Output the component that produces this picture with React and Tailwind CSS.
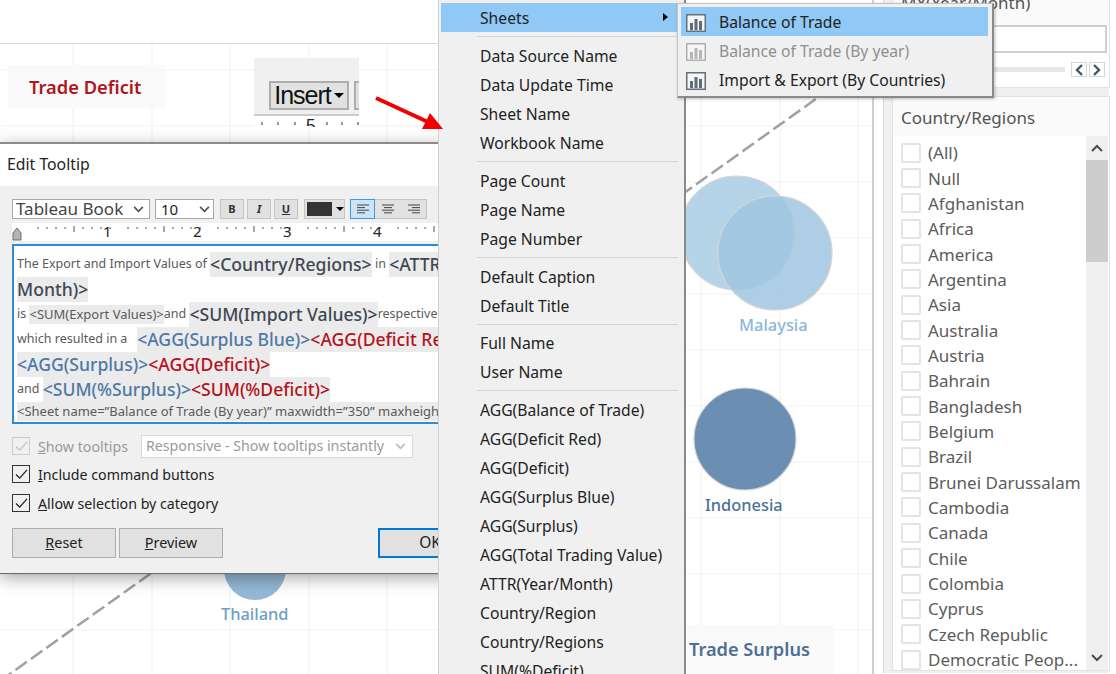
import React from 'react';

const menuGroups = [
  ['Data Source Name', 'Data Update Time', 'Sheet Name', 'Workbook Name'],
  ['Page Count', 'Page Name', 'Page Number'],
  ['Default Caption', 'Default Title'],
  ['Full Name', 'User Name'],
  [
    'AGG(Balance of Trade)',
    'AGG(Deficit Red)',
    'AGG(Deficit)',
    'AGG(Surplus Blue)',
    'AGG(Surplus)',
    'AGG(Total Trading Value)',
    'ATTR(Year/Month)',
    'Country/Region',
    'Country/Regions',
    'SUM(%Deficit)',
  ],
];

const countries = [
  '(All)', 'Null', 'Afghanistan', 'Africa', 'America', 'Argentina', 'Asia', 'Australia', 'Austria',
  'Bahrain', 'Bangladesh', 'Belgium', 'Brazil', 'Brunei Darussalam', 'Cambodia', 'Canada', 'Chile',
  'Colombia', 'Cyprus', 'Czech Republic', 'Democratic Peop...',
];

const sheets = [
  { name: 'Balance of Trade', active: true },
  { name: 'Balance of Trade (By year)', disabled: true },
  { name: 'Import & Export (By Countries)' },
];

// Canvas behind everything: light grid, dashed reference line, bubbles
const ChartLayer = () => {
  const xs = [73, 152, 230, 309, 387, 466, 544, 623, 701, 780, 858];
  const ys = [70, 126, 182, 238, 294, 350, 406, 462, 518, 574, 630];
  return (
    <svg width="872" height="674" className="absolute left-0 top-0">
      <line x1="0" y1="43.5" x2="872" y2="43.5" stroke="#d9d9d9" />
      {xs.map((x) => (
        <line key={x} x1={x} y1="44" x2={x} y2="674" stroke="#f1f1f1" />
      ))}
      {ys.map((y) => (
        <line key={y} x1="0" y1={y} x2="872" y2={y} stroke="#f1f1f1" />
      ))}
      <line x1="0" y1="681" x2="935" y2="14" stroke="#a0a0a0" strokeWidth="2.5" strokeDasharray="14 5" />
      <circle cx="255" cy="569" r="31" fill="#94b8d6" />
      <circle cx="737" cy="233" r="57" fill="#a9cce4" fillOpacity="0.85" stroke="#d4d4d4" strokeWidth="1.2" />
      <circle cx="775" cy="253" r="57" fill="#a0c6e0" fillOpacity="0.85" stroke="#d4d4d4" strokeWidth="1.2" />
      <circle cx="745" cy="439" r="51" fill="#6a8fb2" stroke="#d4d4d4" strokeWidth="1.2" />
    </svg>
  );
};

const ChartLabel = ({ className, children }) => (
  <div className={`absolute font-['Noto_Sans',sans-serif] text-[16.4px] font-medium leading-5 ${className}`}>
    {children}
  </div>
);

const ChevronIcon = ({ up, className = 'w-3 h-2' }) => (
  <svg viewBox="0 0 12 8" className={className}>
    <path d={up ? 'M1 7 L6 2 L11 7' : 'M1 1 L6 6 L11 1'} fill="none" stroke="currentColor" strokeWidth="2" />
  </svg>
);

const Sidebar = () => (
  <div className="w-[244px] h-[674px] shrink-0 bg-white border-l-2 border-[#cfcfcf] pl-[9px] overflow-hidden font-['Noto_Sans',sans-serif]">
    <div className="h-full w-[226px] bg-[#f0f0f0] border-l border-[#d8d8d8] pl-[8px]">
      <div className="w-[218px] h-[89px] bg-white border border-[#e2e2e2] -mt-px">
        <div className="h-[25px] bg-[#fafafa] flex items-start px-2">
          <span className="text-[17px] leading-[24px] -mt-[9px] text-[#555] whitespace-nowrap">MY(Year/Month)</span>
        </div>
        <div className="mx-[2px] h-[28px] bg-white border-2 border-[#cfcfcf]" />
        <div className="flex items-center gap-[2px] mt-[9px] pr-[4px]">
          <div className="h-[5px] flex-1 bg-[#e6e6e6]" />
          <div className="ml-[4px] w-[16px] h-[15px] border border-[#d5d5d5] flex items-center justify-center text-[#44566c]">
            <svg viewBox="0 0 8 12" className="w-[8px] h-[12px]"><path d="M7 1 L2 6 L7 11" fill="none" stroke="currentColor" strokeWidth="2.4" /></svg>
          </div>
          <div className="w-[16px] h-[15px] border border-[#d5d5d5] flex items-center justify-center text-[#44566c]">
            <svg viewBox="0 0 8 12" className="w-[8px] h-[12px]"><path d="M1 1 L6 6 L1 11" fill="none" stroke="currentColor" strokeWidth="2.4" /></svg>
          </div>
        </div>
      </div>
      <div className="w-[218px] h-[575px] mt-[8px] bg-white border border-[#e2e2e2]">
        <div className="h-[39px] pt-[2px] bg-[#fafafa] flex items-center px-2 text-[17px] text-[#555]">Country/Regions</div>
        <div className="flex h-[534px] pr-[1px]">
          <div className="flex-1 min-w-0 pl-2 pt-[4px]">
            {countries.map((name) => (
              <div key={name} className="h-[25.35px] flex items-center gap-[7px]">
                <div className="w-[20px] h-[20px] shrink-0 bg-white border-2 border-[#e4e4e4] rounded-[2px]" />
                <span className="text-[17px] leading-none text-[#5c5c5c] whitespace-nowrap">{name}</span>
              </div>
            ))}
          </div>
          <div className="w-[22px] shrink-0 bg-[#f0f0f0] flex flex-col">
            <div className="h-[24px] flex items-center justify-center text-[#4d4d4d]"><ChevronIcon up /></div>
            <div className="h-[102px] bg-[#cdcdcd]" />
            <div className="flex-1 flex items-end justify-center pb-[8px] text-[#4d4d4d]"><ChevronIcon /></div>
          </div>
        </div>
      </div>
    </div>
  </div>
);

const InsertToolbar = () => (
  <div className="absolute left-[254px] top-[58px] w-[105px] h-[69px] overflow-hidden bg-white font-['Liberation_Sans',sans-serif]">
    <div className="h-[58px] bg-[#f0f0f0] border-b-2 border-[#cbcbcb] pt-[23px] pl-[15px] flex gap-[5px]">
      <div className="w-[80px] h-[29px] shrink-0 bg-[#e1e1e1] border-2 border-[#adadad] flex items-center justify-center gap-[3px] text-[#111]">
        <span className="text-[25px] tracking-[-1px] leading-none">Insert</span>
        <span className="w-0 h-0 border-x-[5px] border-x-transparent border-t-[5px] border-t-black" />
      </div>
      <div className="w-[20px] h-[29px] shrink-0 bg-[#e1e1e1] border-2 border-[#adadad]" />
    </div>
    <div className="relative h-[11px] overflow-hidden">
      <svg width="105" height="11" className="absolute left-0 top-0">
        {[8, 24, 41, 73, 88, 104].map((x) => (
          <line key={x} x1={x} y1="6" x2={x} y2="9" stroke="#333" />
        ))}
      </svg>
      <span className="absolute left-[52px] top-0 text-[17px] leading-[20px] text-[#222]">5</span>
    </div>
  </div>
);

const ToolBtn = ({ children, className = '' }) => (
  <div className={`w-[24px] h-[20px] bg-[#e1e1e1] border border-[#c4c4c4] flex items-center justify-center text-[11px] text-[#333] ${className}`}>
    {children}
  </div>
);

const AlignIcon = ({ lines }) => (
  <svg viewBox="0 0 14 10" className="w-[14px] h-[10px]">
    {lines.map(([x1, x2], i) => (
      <line key={i} x1={x1} x2={x2} y1={1 + i * 2.6} y2={1 + i * 2.6} stroke="#444" strokeWidth="1" />
    ))}
  </svg>
);

const TooltipRuler = () => {
  const ticks = [];
  for (let x = 26; x < 440; x += 9) {
    if ((x - 17) % 90 === 0) continue;
    const tall = (x - 17) % 45 === 0;
    ticks.push(
      <line key={x} x1={x} x2={x} y1={tall ? 226 - 223 : 227 - 223} y2={tall ? 232 - 223 : 229 - 223} stroke="#555" />
    );
  }
  return (
    <div className="relative h-[18px] mt-[4px] bg-white">
      <svg width="470" height="18" className="absolute left-0 top-0">
        {ticks}
        <path d="M1 17 V10 L5 5 L9 10 V17 Z" fill="#b4b4b4" stroke="#6d6d6d" />
      </svg>
      {[1, 2, 3, 4].map((n, i) => (
        <span key={n} className={`absolute top-[-3px] text-[15px] leading-[22px] text-[#222] ${['left-[91px]', 'left-[181px]', 'left-[271px]', 'left-[361px]'][i]}`}>
          {n}
        </span>
      ))}
    </div>
  );
};

const Small = ({ children, shaded }) => (
  <span className={`font-normal text-[#5a5a5a] ${shaded ? 'text-[13px] bg-[#ebebeb]' : 'text-[12.5px]'}`}>{children}</span>
);
const Field = ({ children, color = 'text-[#3f4852]' }) => (
  <span className={`text-[17.6px] leading-[25px] bg-[#ebebeb] ${color}`}>{children}</span>
);
const Line = ({ children, className = 'h-[25px]' }) => (
  <div className={`${className} flex items-center whitespace-nowrap overflow-hidden`}>{children}</div>
);

const CheckBox = ({ disabled }) => (
  <div className={`w-[18px] h-[18px] shrink-0 border flex items-center justify-center ${disabled ? 'border-[#cccccc]' : 'border-[#333]'}`}>
    <svg viewBox="0 0 14 12" className="w-[13px] h-[11px]">
      <path d="M1 6 L5 10 L13 1" fill="none" stroke={disabled ? '#c4c4c4' : '#222'} strokeWidth="1.4" />
    </svg>
  </div>
);

const EditTooltipDialog = () => (
  <div className="absolute left-0 top-[142px] w-[480px] h-[432px] bg-[#f0f0f0] border-t-2 border-[#8c8c8c] border-b border-b-[#6d6d6d] shadow-[0_4px_16px_rgba(0,0,0,0.35)] font-['Noto_Sans',sans-serif]">
    <div className="h-[42px] bg-white flex items-center pl-[7px] text-[15.8px] text-[#222]">Edit Tooltip</div>
    <div className="px-[12px] pt-[13px]">
      <div className="flex items-center h-[20px]">
        <div className="w-[138px] h-[20px] bg-white border border-[#a9a9a9] flex items-center justify-between pl-[3px] pr-[5px] text-[17px] text-[#444]">
          <span>Tableau Book</span>
          <ChevronIcon className="w-[11px] h-[7px] text-[#555]" />
        </div>
        <div className="ml-[5px] w-[59px] h-[20px] bg-white border border-[#a9a9a9] flex items-center justify-between pl-[5px] pr-[3px] text-[15px] text-[#222]">
          <span>10</span>
          <ChevronIcon className="w-[11px] h-[7px] text-[#555]" />
        </div>
        <div className="ml-[6px] flex gap-[3px]">
          <ToolBtn><b>B</b></ToolBtn>
          <ToolBtn><i className="font-bold">I</i></ToolBtn>
          <ToolBtn><u className="font-bold">U</u></ToolBtn>
        </div>
        <div className="ml-[6px] w-[41px] h-[20px] bg-[#e1e1e1] border border-[#c4c4c4] flex items-center pl-[2px] gap-[4px]">
          <div className="w-[25px] h-[14px] bg-[#333]" />
          <span className="w-0 h-0 border-x-[4px] border-x-transparent border-t-[4px] border-t-black" />
        </div>
        <div className="ml-[5px] flex h-[20px] bg-[#e1e1e1] border border-[#c4c4c4]">
          <div className="w-[25px] bg-[#cce4f7] border border-[#3f9ae0] flex items-center justify-center -my-px -ml-px">
            <AlignIcon lines={[[1, 13], [1, 9], [1, 13], [1, 9]]} />
          </div>
          <div className="w-[26px] flex items-center justify-center">
            <AlignIcon lines={[[1, 13], [3, 11], [1, 13], [3, 11]]} />
          </div>
          <div className="w-[25px] flex items-center justify-center">
            <AlignIcon lines={[[1, 13], [5, 13], [1, 13], [5, 13]]} />
          </div>
        </div>
      </div>
      <TooltipRuler />
      <div className="h-[180px] mt-[3px] bg-white border-2 border-[#2f8ad6] pl-[3px] pt-[6px] overflow-hidden font-medium">
        <Line>
          <Small>The Export and Import Values of&nbsp;</Small>
          <Field>&lt;Country/Regions&gt;</Field>
          <Small>&nbsp;in&nbsp;</Small>
          <Field>&lt;ATTR(Year/</Field>
        </Line>
        <Line><Field>Month)&gt;</Field></Line>
        <Line>
          <Small>is&nbsp;</Small>
          <Small shaded>&lt;SUM(Export Values)&gt;</Small>
          <Small>and&nbsp;</Small>
          <Field>&lt;SUM(Import Values)&gt;</Field>
          <Small>respectively</Small>
        </Line>
        <Line>
          <Small>which resulted in a&nbsp;&nbsp;&nbsp;</Small>
          <Field color="text-[#4e79a7]">&lt;AGG(Surplus Blue)&gt;</Field>
          <Field color="text-[#b5121b]">&lt;AGG(Deficit Red)&gt;</Field>
        </Line>
        <Line>
          <Field color="text-[#4e79a7]">&lt;AGG(Surplus)&gt;</Field>
          <Field color="text-[#b5121b]">&lt;AGG(Deficit)&gt;</Field>
        </Line>
        <Line>
          <Small>and&nbsp;</Small>
          <Field color="text-[#4e79a7]">&lt;SUM(%Surplus)&gt;</Field>
          <Field color="text-[#b5121b]">&lt;SUM(%Deficit)&gt;</Field>
        </Line>
        <Line className="h-[19px]">
          <Small shaded>&lt;Sheet name=”Balance of Trade (By year)” maxwidth=”350” maxheight=”300”&gt;</Small>
        </Line>
      </div>
      <div className="mt-[10px] flex items-center h-[24px]">
        <CheckBox disabled />
        <span className="ml-[8px] pt-[2px] w-[103px] text-[14.2px] text-[#9a9a9a]"><u>S</u>how tooltips</span>
        <div className="w-[272px] h-[23px] bg-white border border-[#d9d9d9] flex items-center justify-between pl-[4px] pr-[6px] text-[14.2px] text-[#9a9a9a]">
          <span className="whitespace-nowrap">Responsive - Show tooltips instantly</span>
          <ChevronIcon className="w-[11px] h-[7px] text-[#bbb]" />
        </div>
      </div>
      <div className="mt-[4px] flex items-center h-[24px]">
        <CheckBox />
        <span className="ml-[8px] pt-[2px] text-[14.2px] text-[#222]"><u>I</u>nclude command buttons</span>
      </div>
      <div className="mt-[5px] flex items-center h-[24px]">
        <CheckBox />
        <span className="ml-[8px] pt-[2px] text-[14.2px] text-[#222]"><u>A</u>llow selection by category</span>
      </div>
      <div className="mt-[13px] flex text-[14.4px] text-[#222]">
        <div className="w-[104px] h-[30px] shrink-0 bg-[#e1e1e1] border border-[#adadad] flex items-center justify-center"><span><u>R</u>eset</span></div>
        <div className="ml-[3px] w-[104px] h-[30px] shrink-0 bg-[#e1e1e1] border border-[#adadad] flex items-center justify-center"><span><u>P</u>review</span></div>
        <div className="ml-[155px] w-[104px] h-[30px] shrink-0 bg-[#e1e1e1] border-2 border-[#0078d7] flex items-center justify-center text-[15.5px]">OK</div>
      </div>
    </div>
  </div>
);

const InsertMenu = () => (
  <div className="absolute left-[438px] top-0 w-[248px] h-[674px] overflow-hidden bg-[#f0f0f0] border-l border-[#d0d0d0] border-r-2 border-r-[#8a8a8a] pt-[3px] pl-[2px] pr-[6px] font-['Noto_Sans',sans-serif] text-[15.7px] text-[#222]">
    <div className="relative h-[29px] w-[236px] pt-[2px] bg-[#90c8f6] flex items-center pl-[39px]">
      Sheets
      <span className="absolute left-[222px] top-[10px] w-0 h-0 border-y-[4px] border-y-transparent border-l-[5px] border-l-black" />
    </div>
    {menuGroups.map((group, i) => (
      <div key={group[0]}>
        <div className={`${i === 3 ? 'h-[8px]' : 'h-[9px]'} flex items-center pl-[36px]`}>
          <div className="h-px flex-1 bg-[#d4d4d4]" />
        </div>
        {group.map((item) => (
          <div key={item} className="h-[29px] pt-[2px] flex items-center pl-[39px] whitespace-nowrap">{item}</div>
        ))}
      </div>
    ))}
  </div>
);

const SheetIcon = ({ muted }) => (
  <svg viewBox="0 0 20 18" className="w-[20px] h-[18px] shrink-0">
    <rect x="0.75" y="0.75" width="18.5" height="16.5" fill="#f5f5f5" stroke={muted ? '#b0b0b0' : '#64707d'} strokeWidth="1.5" />
    <g fill={muted ? '#b5b5b5' : '#5d6b7a'}>
      <rect x="4" y="9" width="3" height="7" />
      <rect x="8.5" y="5" width="3" height="11" />
      <rect x="13" y="7" width="3" height="9" />
    </g>
  </svg>
);

const SheetsSubmenu = () => (
  <div className="absolute left-[677px] top-[3px] w-[317px] h-[95px] bg-[#f0f0f0] border border-[#c4c4c4] border-r-2 border-b-2 border-r-[#8a8a8a] border-b-[#8a8a8a] shadow-[1px_1px_3px_rgba(0,0,0,0.25)] pt-[3px] pl-[3px] pr-[4px] font-['Noto_Sans',sans-serif] text-[15.7px]">
    {sheets.map((sheet) => (
      <div
        key={sheet.name}
        className={`h-[29px] pt-[2px] flex items-center pl-[5px] gap-[13px] ${sheet.active ? 'bg-[#90c8f6]' : ''} ${sheet.disabled ? 'text-[#8f8f8f]' : 'text-[#222]'}`}
      >
        <SheetIcon muted={sheet.disabled} />
        <span className="whitespace-nowrap">{sheet.name}</span>
      </div>
    ))}
  </div>
);

const RedArrow = () => (
  <svg width="80" height="45" className="absolute left-[370px] top-[92px]">
    <line x1="6" y1="6" x2="58" y2="30" stroke="#f00000" strokeWidth="4" />
    <polygon points="73,37 52,37 60,21" fill="#f00000" />
  </svg>
);

export default function App() {
  return (
    <div className="relative w-[1116px] h-[674px] overflow-hidden bg-white flex">
      <div className="relative w-[872px] h-[674px] shrink-0">
        <ChartLayer />
        <div className="absolute left-[8px] top-[65px] w-[158px] h-[43px] bg-[#fafafa] flex items-center pl-[21px] font-['Noto_Sans',sans-serif] text-[18.3px] font-semibold text-[#b0151d]">
          Trade Deficit
        </div>
        <div className="absolute left-[686px] top-[625px] w-[148px] h-[49px] bg-[#fafafa] flex items-center pl-[3px] font-['Noto_Sans',sans-serif] text-[18.2px] font-semibold text-[#4e6f94]">
          Trade Surplus
        </div>
        <ChartLabel className="left-[221px] top-[604px] text-[#6f9dc6]">Thailand</ChartLabel>
        <ChartLabel className="left-[739px] top-[315px] text-[#8ab8dc]">Malaysia</ChartLabel>
        <ChartLabel className="left-[705px] top-[495px] text-[#4e7096]">Indonesia</ChartLabel>
      </div>
      <Sidebar />
      <InsertToolbar />
      <EditTooltipDialog />
      <InsertMenu />
      <SheetsSubmenu />
      <RedArrow />
    </div>
  );
}
